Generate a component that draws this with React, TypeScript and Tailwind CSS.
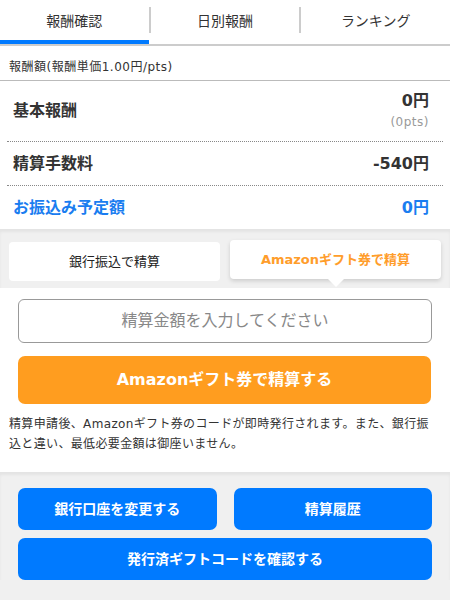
import React from "react";

const font = { fontFamily: '"DejaVu Sans", "Noto Sans CJK JP", sans-serif' };

const tabs = ["報酬確認", "日別報酬", "ランキング"];

const App: React.FC = () => {
  return (
    <div
      className="w-[450px] h-[600px] bg-[#f0f0f0] text-[#333] overflow-hidden"
      style={font}
    >
      {/* Tabs */}
      <div className="flex bg-white border-b-2 border-[#ccc] h-[46px]">
        {tabs.map((t, i) => (
          <React.Fragment key={t}>
            {i > 0 && <div className="w-[2px] h-[26px] mt-[7px] bg-[#ccc]"></div>}
            <div className="flex-1 flex flex-col">
              <div className="h-[40px] flex items-center justify-center text-[14px] text-[#333] font-['Noto_Sans_CJK_JP']">
                {t}
              </div>
              {i === 0 && <div className="h-[4px] bg-[#007aff]"></div>}
            </div>
          </React.Fragment>
        ))}
      </div>

      {/* Summary */}
      <div className="bg-white">
        <div className="h-[35px] flex items-center pt-[8px] px-[9px] text-[12px] tracking-[0.5px] text-[#333] border-b border-[#bbb]">
          報酬額(報酬単価1.00円/pts)
        </div>
        <div className="mx-[7px]">
          <div className="h-[61px] flex items-center justify-between pl-[6px] pr-[14px] border-b border-dotted border-[#888]">
            <span className="text-[16px] font-bold">基本報酬</span>
            <div className="flex flex-col items-end">
              <span className="text-[16px] font-bold leading-[20px]">0円</span>
              <span className="text-[12px] text-[#999] leading-[20px] mt-[1px] tracking-[0.5px]">(0pts)</span>
            </div>
          </div>
          <div className="h-[44px] flex items-center justify-between pl-[6px] pr-[14px] border-b border-dotted border-[#888]">
            <span className="text-[16px] font-bold">精算手数料</span>
            <span className="text-[16px] font-bold">-540円</span>
          </div>
          <div className="h-[43px] flex items-center justify-between pl-[6px] pr-[14px] text-[#1a7df0]">
            <span className="text-[16px] font-bold">お振込み予定額</span>
            <span className="text-[16px] font-bold">0円</span>
          </div>
        </div>
      </div>

      {/* Settlement method switch */}
      <div className="h-[59px] bg-[#f0f0f0] shadow-[inset_0_3px_3px_rgba(0,0,0,0.05)] flex gap-[10px] px-[9px] pt-[11px]">
        <div className="flex-1 h-[39px] mt-[2px] bg-white rounded-[4px] flex items-center justify-center text-[13px] text-[#222]">
          銀行振込で精算
        </div>
        <div className="relative flex-1 h-[39px] bg-white rounded-[4px] shadow-[0_2px_4px_rgba(0,0,0,0.15)] flex items-center justify-center text-[13px] font-bold text-[#ff9d2b]">
          Amazonギフト券で精算
          <div className="absolute left-1/2 -translate-x-1/2 -bottom-[8px] w-0 h-0 border-l-[8px] border-r-[8px] border-t-[8px] border-l-transparent border-r-transparent border-t-white"></div>
        </div>
      </div>

      {/* Amazon form */}
      <div className="bg-white pt-[11px] pb-[18px]">
        <div className="mx-[18px] h-[44px] border border-[#999] rounded-[6px] flex items-center justify-center text-[16px] text-[#888]">
          精算金額を入力してください
        </div>
        <button className="mx-[18px] mt-[13px] w-[413px] h-[48px] rounded-[7px] bg-[#ff9d1f] text-white text-[16px] font-bold flex items-center justify-center">
          Amazonギフト券で精算する
        </button>
        <p className="pl-[9px] pr-[12px] mt-[10px] text-[12px] leading-[20px] tracking-[0.35px] text-[#333]">
          精算申請後、Amazonギフト券のコードが即時発行されます。また、銀行振込と違い、最低必要金額は御座いません。
        </p>
      </div>

      {/* Bottom actions */}
      <div className="bg-[#f0f0f0] shadow-[inset_0_3px_3px_rgba(0,0,0,0.05)] px-[18px] pt-[16px] flex flex-col gap-[8px]">
        <div className="flex gap-[17px]">
          <button className="flex-1 h-[42px] rounded-[7px] bg-[#007aff] text-white text-[14px] font-bold">
            銀行口座を変更する
          </button>
          <button className="flex-1 h-[42px] rounded-[7px] bg-[#007aff] text-white text-[14px] font-bold">
            精算履歴
          </button>
        </div>
        <button className="h-[42px] rounded-[7px] bg-[#007aff] text-white text-[14px] font-bold">
          発行済ギフトコードを確認する
        </button>
      </div>
    </div>
  );
};

export default App;
